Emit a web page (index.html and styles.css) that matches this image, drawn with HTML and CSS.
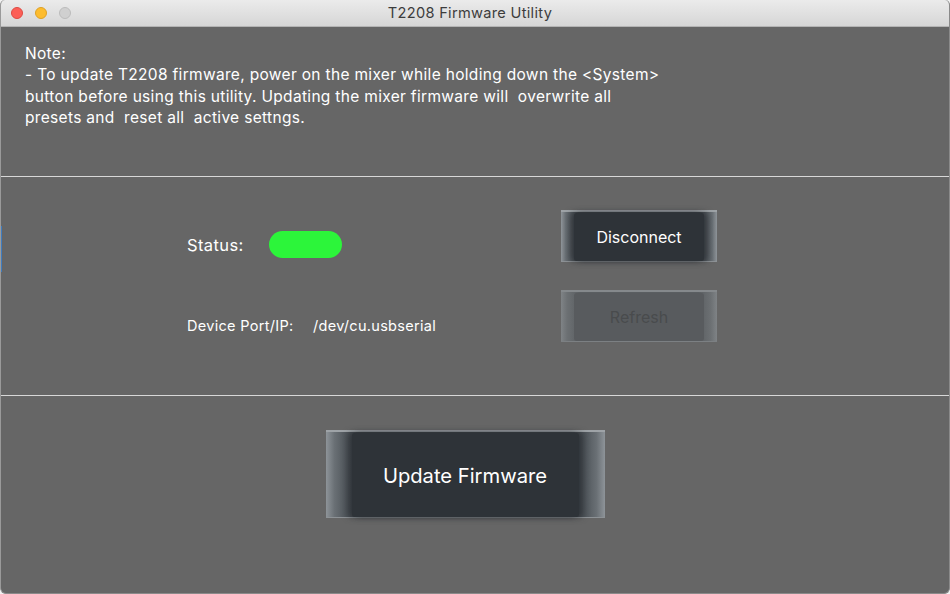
FILE: index.html
```html
<!DOCTYPE html>
<html>
<head>
<meta charset="utf-8">
<title>T2208 Firmware Utility</title>
<link rel="stylesheet" href="styles.css">
</head>
<body>
<div class="window">
  <div class="titlebar">
    <div class="lights">
      <span class="light red"></span>
      <span class="light yellow"></span>
      <span class="light gray"></span>
    </div>
    <div class="title">T2208 Firmware Utility</div>
  </div>
  <div class="content">
    <span class="edge-mark"></span>
    <section class="note">
      <p>Note:<br>- To update T2208 firmware, power on the mixer while holding down the &lt;System&gt;<br>button before using this utility. Updating the mixer firmware will&nbsp; overwrite all<br>presets and&nbsp; reset all&nbsp; active settngs.</p>
    </section>
    <section class="connection">
      <div class="info">
        <div class="status-row">
          <span class="status-label">Status:</span>
          <span class="status-pill"></span>
        </div>
        <div class="port-row">
          <span class="port-label">Device Port/IP:</span>
          <span class="port-value">/dev/cu.usbserial</span>
        </div>
      </div>
      <div class="actions">
        <div class="btn btn-small"><span class="btn-face">Disconnect</span></div>
        <div class="btn btn-small disabled"><span class="btn-face">Refresh</span></div>
      </div>
    </section>
    <section class="update">
      <div class="btn btn-large"><span class="btn-face">Update Firmware</span></div>
    </section>
  </div>
</div>
</body>
</html>
```
FILE: styles.css
```css
html, body {
  margin: 0;
  padding: 0;
  background: #f2f2f2;
}
body {
  width: 950px;
  height: 594px;
  overflow: hidden;
  font-family: "Inter", "Liberation Sans", Arial, sans-serif;
}
.window {
  width: 950px;
  height: 594px;
  box-sizing: border-box;
  border-radius: 5px 5px 6px 6px;
  overflow: hidden;
  display: flex;
  flex-direction: column;
  background: #666666;
  border-left: 1px solid #9a9a9a;
  border-right: 1px solid #8a8a8a;
  border-bottom: 1px solid #8a8a8a;
}
.titlebar {
  height: 27px;
  flex: 0 0 27px;
  box-sizing: border-box;
  background: linear-gradient(#ebebeb, #d6d6d6);
  border-bottom: 1px solid #b4b4b4;
  position: relative;
  display: flex;
  align-items: center;
  justify-content: center;
}
.lights {
  position: absolute;
  left: 10px;
  top: 7px;
  display: flex;
  gap: 12px;
}
.light {
  width: 12px;
  height: 12px;
  border-radius: 50%;
  box-sizing: border-box;
}
.red { background: #fc5f57; border: 1px solid #de4a42; }
.yellow { background: #fdbc2e; border: 1px solid #dea124; }
.gray { background: #d0d0d0; border: 1px solid #bcbcbc; }
.title {
  font-size: 14.6px;
  color: #3c3c3c;
  letter-spacing: 0.3px;
  margin-right: 10px;
}
.content {
  flex: 1;
  display: flex;
  flex-direction: column;
  position: relative;
  color: #ffffff;
}
.edge-mark {
  position: absolute;
  left: -1px;
  top: 199px;
  width: 2px;
  height: 46px;
  background: #3f7cbf;
}
.note {
  height: 150px;
  box-sizing: border-box;
  border-bottom: 1px solid #d8d8d8;
  padding: 16px 0 0 24px;
}
.note p {
  margin: 0;
  font-size: 15.5px;
  line-height: 21.3px;
  letter-spacing: 0.32px;
}
.connection {
  height: 219px;
  box-sizing: border-box;
  border-bottom: 1px solid #d8d8d8;
  display: flex;
  padding: 33px 0 0 186px;
}
.info {
  width: 374px;
  display: flex;
  flex-direction: column;
}
.status-row {
  display: flex;
  align-items: center;
  height: 27px;
  margin-top: 21px;
}
.status-label {
  font-size: 16.5px;
  letter-spacing: 0.4px;
  width: 82px;
}
.status-pill {
  width: 73px;
  height: 27px;
  border-radius: 14px;
  background: #2cf53a;
}
.port-row {
  margin-top: 59px;
  font-size: 14.5px;
  letter-spacing: 0.3px;
  display: flex;
}
.port-label { width: 126px; }
.actions {
  display: flex;
  flex-direction: column;
  gap: 28px;
}
.btn {
  box-sizing: border-box;
  display: flex;
  align-items: stretch;
  background: linear-gradient(to right, #8e9499 0%, #6a7075 3%, #4a5055 8%, #3a3f44 11%, #3a3f44 89%, #4a5055 92%, #6a7075 97%, #8e9499 100%);
  border-top: 2px solid #9ea3a7;
  border-bottom: 1px solid #8d9296;
}
.btn-face {
  flex: 1;
  margin: 1px 9% 0 10%;
  border-radius: 3px;
  background: #2e3338;
  display: flex;
  align-items: center;
  justify-content: center;
  color: #ffffff;
  box-shadow: -4px 0 6px rgba(40,44,48,0.6), 4px 0 6px rgba(40,44,48,0.6);
}
.btn-small {
  width: 156px;
  height: 52px;
  font-size: 16px;
}
.btn-small .btn-face {
  margin-left: 13px;
  margin-right: 13px;
}
.disabled {
  background: linear-gradient(to right, #7f8386 0%, #6c7073 4%, #5f6366 10%, #5a5e61 12%, #5a5e61 88%, #5f6366 90%, #6c7073 96%, #7f8386 100%);
  border-top-color: #85898c;
  border-bottom-color: #7c8083;
}
.disabled .btn-face {
  background: #585b5e;
  color: #494b4d;
  box-shadow: none;
}
.update {
  flex: 1;
  display: flex;
  justify-content: center;
  padding: 34px 20px 0 0;
}
.btn-large {
  width: 279px;
  height: 88px;
  font-size: 20.2px;
}
.btn-large .btn-face {
  margin-left: 26px;
  margin-right: 26px;
}
```
